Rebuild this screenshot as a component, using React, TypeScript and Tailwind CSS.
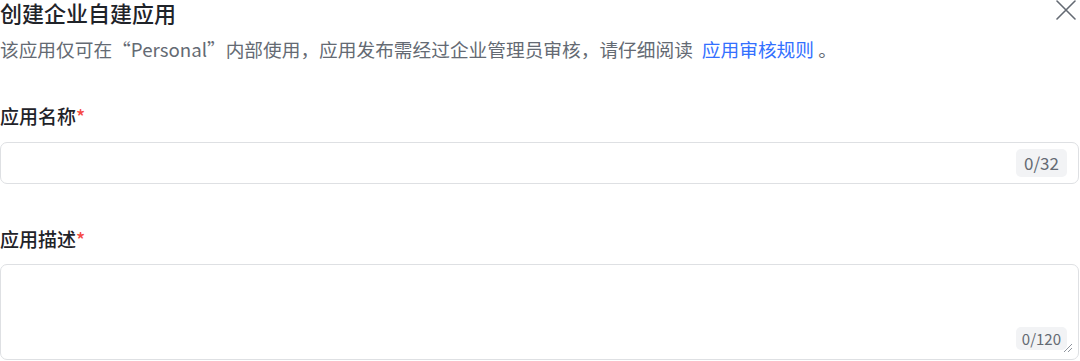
import React from "react";

export default function App() {
  return (
    <div
      className="w-[1080px] h-[361px] overflow-hidden bg-white text-[#1f2329]"
      style={{ fontFamily: '"Noto Sans CJK SC", "Noto Sans", sans-serif' }}
    >
      <div className="flex items-start justify-between">
        <h1 className="text-[22px] leading-[24px] font-medium text-[#1f2329]">创建企业自建应用</h1>
        <button className="mr-[4px] w-[20px] h-[20px] flex items-center justify-center text-[#646a73]">
          <svg width="20" height="20" viewBox="0 0 20 20" fill="none" stroke="currentColor" strokeWidth="1.6" strokeLinecap="round">
            <path d="M1 1 L19 19 M19 1 L1 19" />
          </svg>
        </button>
      </div>
      <p className="mt-[11px] text-[18.7px] leading-[28px] text-[#646a73] whitespace-nowrap">
        该应用仅可在“Personal”内部使用，应用发布需经过企业管理员审核，请仔细阅读
        <span className="ml-[9px] text-[#3370ff]">应用审核规则</span> 。
      </p>

      <div className="mt-[39px] text-[19px] leading-[28px] font-medium text-[#1f2329]">
        应用名称<span className="text-[#f54a45]">*</span>
      </div>
      <div className="mt-[12px] h-[42px] w-[1079px] rounded-[7px] border border-[#dee0e3] flex items-center justify-end pr-[11px]">
        <span className="h-[28px] px-[8px] rounded-[5px] bg-[#f2f3f5] text-[#646a73] text-[17px] leading-[28px]">0/32</span>
      </div>

      <div className="mt-[41px] text-[19px] leading-[28px] font-medium text-[#1f2329]">
        应用描述<span className="text-[#f54a45]">*</span>
      </div>
      <div className="relative mt-[11px] h-[96px] w-[1079px] rounded-[7px] border border-[#dee0e3] flex items-end justify-end pr-[11px] pb-[9px]">
        <span className="h-[23px] px-[6px] rounded-[5px] bg-[#f2f3f5] text-[#646a73] text-[15px] leading-[23px]">0/120</span>
        <svg className="absolute right-[5px] bottom-[6px]" width="10" height="10" viewBox="0 0 10 10" stroke="#8f959e" strokeWidth="1" fill="none">
          <path d="M9 1 L1 9 M9 5 L5 9" />
        </svg>
      </div>
    </div>
  );
}
